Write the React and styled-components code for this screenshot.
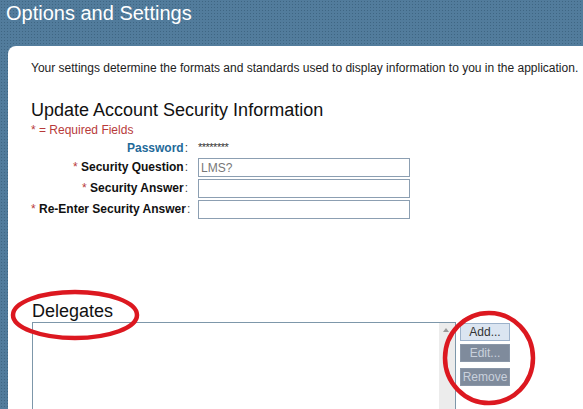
import React from "react";
import styled, { createGlobalStyle } from "styled-components";

const Global = createGlobalStyle`
  html, body { margin: 0; padding: 0; overflow: hidden; }
  body { font-family: "Liberation Sans", Arial, sans-serif; }
`;

export default function App() {
  return (
    <>
      <Global />
      <Page>
        <Header>
          <h1>Options and Settings</h1>
        </Header>
        <Card>
          <Intro>Your settings determine the formats and standards used to display information to you in the application.</Intro>

          <SectionTitle>Update Account Security Information</SectionTitle>
          <Required>* = Required Fields</Required>

          <Form>
            <Label $blue>Password<Colon>:</Colon></Label>
            <Masked>********</Masked>

            <Label><Star>*</Star> Security Question<Colon>:</Colon></Label>
            <Field defaultValue="LMS?" />

            <Label><Star>*</Star> Security Answer<Colon>:</Colon></Label>
            <Field />

            <Label><Star>*</Star> Re-Enter Security Answer<Colon>:</Colon></Label>
            <Field />
          </Form>

          <DelegatesTitle>Delegates</DelegatesTitle>
          <DelegatesRow>
            <ListBox>
              <Scroll>
                <span className="arrow" />
              </Scroll>
            </ListBox>
            <Buttons>
              <Btn $primary>Add...</Btn>
              <Btn>Edit...</Btn>
              <Btn $spaced>Remove</Btn>
            </Buttons>
          </DelegatesRow>
        </Card>

        <Marks viewBox="0 0 583 409">
          <ellipse cx="75" cy="315" rx="62" ry="23" />
          <ellipse cx="489" cy="358" rx="44" ry="45" />
        </Marks>
      </Page>
    </>
  );
}

const Page = styled.div`
  position: relative;
  width: 583px;
  height: 409px;
  overflow: hidden;
  background-color: #527c9c;
  background-image: radial-gradient(rgba(30, 60, 85, 0.35) 0.8px, transparent 1px);
  background-size: 3px 3px;
  display: flex;
  flex-direction: column;
`;

const Header = styled.div`
  height: 46px;
  padding-left: 6px;
  flex-shrink: 0;

  h1 {
    margin: 0;
    padding-top: 1px;
    font-size: 20px;
    font-weight: normal;
    line-height: 24px;
    color: #ffffff;
  }
`;

const Card = styled.div`
  flex: 1;
  margin-left: 8px;
  background: #ffffff;
  border-top-left-radius: 8px;
  padding: 15px 0 0 23px;
  color: #222;
`;

const Intro = styled.div`
  font-size: 12px;
  line-height: 14px;
  color: #222;
  white-space: nowrap;
`;

const SectionTitle = styled.div`
  margin-top: 25px;
  font-size: 18px;
  line-height: 20px;
  color: #111;
`;

const Required = styled.div`
  margin-top: 3px;
  font-size: 12px;
  line-height: 14px;
  color: #b83a3a;
`;

const Form = styled.div`
  display: grid;
  grid-template-columns: 157px 212px;
  grid-template-rows: 16px 19px 19px 19px;
  column-gap: 10px;
  row-gap: 2px;
  align-items: center;
  margin-top: 3px;
`;

const Label = styled.div`
  text-align: right;
  font-size: 12px;
  font-weight: bold;
  line-height: ${(p) => (p.$blue ? "16px" : "19px")};
  color: ${(p) => (p.$blue ? "#1f6a99" : "#111")};
  white-space: nowrap;
`;

const Colon = styled.span`
  font-weight: normal;
  color: #444;
  margin-left: 1px;
`;

const Star = styled.span`
  font-weight: normal;
  color: #b83a3a;
`;

const Masked = styled.div`
  font-size: 11px;
  line-height: 14px;
  color: #333;
  letter-spacing: -0.5px;
  padding-bottom: 3px;
`;

const Field = styled.input`
  box-sizing: border-box;
  width: 212px;
  height: 19px;
  border: 1px solid #8c9fb2;
  padding: 0 2px;
  font-family: "Liberation Sans", Arial, sans-serif;
  font-size: 12px;
  color: #777;
  outline: none;
`;

const DelegatesTitle = styled.div`
  margin-top: 82px;
  font-size: 18px;
  line-height: 20px;
  color: #111;
  padding-left: 1px;
`;

const DelegatesRow = styled.div`
  display: flex;
  align-items: flex-start;
  gap: 4px;
  margin-top: 1px;
  padding-left: 1px;
`;

const ListBox = styled.div`
  box-sizing: border-box;
  width: 424px;
  height: 90px;
  border: 1px solid #7d97aa;
  border-bottom: none;
  display: flex;
  justify-content: flex-end;
`;

const Scroll = styled.div`
  width: 16px;
  background: #ececec;
  position: relative;

  .arrow {
    position: absolute;
    top: 5px;
    left: 4px;
    width: 0;
    height: 0;
    border-left: 3px solid transparent;
    border-right: 3px solid transparent;
    border-bottom: 4px solid #9a9a9a;
  }
`;

const Buttons = styled.div`
  display: flex;
  flex-direction: column;
  gap: 3px;
  padding-top: 1px;
`;

const Btn = styled.button`
  box-sizing: border-box;
  width: 50px;
  height: 18px;
  padding: 0;
  margin-top: ${(p) => (p.$spaced ? "3px" : "0")};
  font-family: "Liberation Sans", Arial, sans-serif;
  font-size: 12px;
  line-height: 16px;
  border: 1px solid ${(p) => (p.$primary ? "#9db2cb" : "#8a97a8")};
  background: ${(p) => (p.$primary ? "#dbe5f1" : "#7f8b9c")};
  color: ${(p) => (p.$primary ? "#333" : "#c9d1dc")};
`;

const Marks = styled.svg`
  position: absolute;
  left: 0;
  top: 0;
  width: 583px;
  height: 409px;
  pointer-events: none;

  ellipse {
    fill: none;
    stroke: #dc1820;
    stroke-width: 4.5;
  }
`;
